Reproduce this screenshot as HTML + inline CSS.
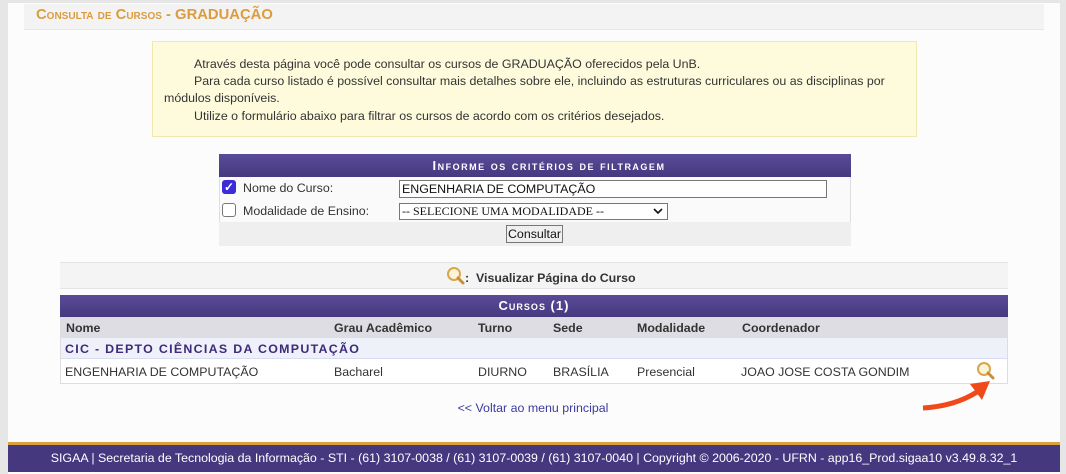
<!DOCTYPE html>
<html><head><meta charset="utf-8"><style>
*{margin:0;padding:0;box-sizing:border-box}
body{width:1066px;height:474px;background:#e6e6e6;font-family:"Liberation Sans",sans-serif;font-size:12.4px;color:#333;position:relative;overflow:hidden}
.a{position:absolute}
.sc{font-variant:small-caps;font-weight:bold;letter-spacing:1px}
.ph{background:linear-gradient(#5a4b97,#46397f);color:#fff;text-align:center}
</style></head><body>
<div class="a" style="left:8px;top:3px;width:1052px;height:471px;background:#fcfcfc"></div>
<div class="a" style="left:24px;top:4px;width:1020px;height:26px;background:#f3f3f3;border-bottom:1px solid #e8e8e8"></div>
<div class="a" style="left:36px;top:7px;color:#dc9c3e;font-size:14.8px;font-weight:bold"><span style="font-variant:small-caps">Consulta de Cursos</span> - GRADUAÇÃO</div>

<div class="a" style="left:152px;top:41px;width:765px;height:96px;background:#fdfbdc;border:1px solid #efe8b0;padding:14px 11px;line-height:17px;color:#333">
<div style="text-indent:30px">Através desta página você pode consultar os cursos de GRADUAÇÃO oferecidos pela UnB.</div>
<div style="text-indent:30px">Para cada curso listado é possível consultar mais detalhes sobre ele, incluindo as estruturas curriculares ou as disciplinas por módulos disponíveis.</div>
<div style="text-indent:30px;margin-top:1px">Utilize o formulário abaixo para filtrar os cursos de acordo com os critérios desejados.</div>
</div>

<div class="a" style="left:219px;top:154px;width:632px;height:92px;background:#fafafa;border:1px solid #ddd"></div>
<div class="a ph sc" style="left:219px;top:154px;width:632px;height:23px;line-height:24px;font-size:13px;letter-spacing:1.5px;padding-left:28px">Informe os critérios de filtragem</div>
<div class="a" style="left:222px;top:180px;width:14px;height:14px;background:#3b2bd8;border-radius:3px;color:#fff;font-size:12px;line-height:14px;text-align:center;font-weight:bold">✓</div>
<div class="a" style="left:243px;top:181px">Nome do Curso:</div>
<div class="a" style="left:399px;top:180px;width:428px;height:18px;border:1px solid #777;background:#fff;padding-left:2px;line-height:16px;color:#111">ENGENHARIA DE COMPUTAÇÃO</div>
<div class="a" style="left:222px;top:203px;width:14px;height:14px;background:#fff;border:1px solid #777;border-radius:3px"></div>
<div class="a" style="left:243px;top:204px">Modalidade de Ensino:</div>
<div class="a" style="left:399px;top:203px;width:269px;height:17px;border:1px solid #777;background:#fff;padding-left:2px;font-family:'Liberation Serif',serif;font-size:12px;line-height:15px;color:#111">-- SELECIONE UMA MODALIDADE --<svg style="position:absolute;right:4px;top:4px" width="10" height="7"><path d="M1 1 L5 5 L9 1" fill="none" stroke="#111" stroke-width="1.6"/></svg></div>
<div class="a" style="left:219px;top:222px;width:632px;height:24px;background:#efefef"></div>
<div class="a" style="left:506px;top:225px;width:57px;height:18px;border:1px solid #777;background:#efefef;line-height:16px;text-align:center;color:#111">Consultar</div>

<div class="a" style="left:60px;top:262px;width:948px;height:27px;background:#f4f4f4;border-top:1px solid #e4e4e4;border-bottom:1px solid #e4e4e4"></div>
<svg class="a" style="left:446px;top:266px" width="20" height="20"><circle cx="8" cy="8" r="6" fill="#fdf3d8" stroke="#d8a64c" stroke-width="2"/><line x1="12" y1="12" x2="17" y2="17" stroke="#c79032" stroke-width="3" stroke-linecap="round"/></svg>
<div class="a" style="left:465px;top:271px;font-weight:bold;color:#333">:&nbsp; Visualizar Página do Curso</div>

<div class="a ph sc" style="left:60px;top:295px;width:948px;height:22px;line-height:22px;font-size:13px">Cursos (1)</div>
<div class="a" style="left:60px;top:317px;width:948px;height:67px;border:1px solid #ddd;background:#fff"></div>
<div class="a" style="left:61px;top:317px;width:946px;height:21px;background:#dedde3"></div>
<div class="a" style="left:61px;top:338px;width:946px;height:21px;background:#eef0fa;border-bottom:1px solid #d8dcf0"></div>
<div class="a" style="top:321px;left:66px;font-weight:bold">Nome</div>
<div class="a" style="top:321px;left:334px;font-weight:bold">Grau Acadêmico</div>
<div class="a" style="top:321px;left:478px;font-weight:bold">Turno</div>
<div class="a" style="top:321px;left:553px;font-weight:bold">Sede</div>
<div class="a" style="top:321px;left:637px;font-weight:bold">Modalidade</div>
<div class="a" style="top:321px;left:742px;font-weight:bold">Coordenador</div>
<div class="a" style="top:342px;left:65px;font-weight:bold;color:#3f2a78;letter-spacing:1.3px">CIC - DEPTO CIÊNCIAS DA COMPUTAÇÃO</div>
<div class="a" style="top:365px;left:65px">ENGENHARIA DE COMPUTAÇÃO</div>
<div class="a" style="top:365px;left:334px">Bacharel</div>
<div class="a" style="top:365px;left:478px">DIURNO</div>
<div class="a" style="top:365px;left:553px">BRASÍLIA</div>
<div class="a" style="top:365px;left:637px">Presencial</div>
<div class="a" style="top:365px;left:741px">JOAO JOSE COSTA GONDIM</div>
<svg class="a" style="left:976px;top:361px" width="20" height="20"><circle cx="8" cy="8" r="6" fill="#fdf3d8" stroke="#d8a64c" stroke-width="2"/><line x1="12" y1="12" x2="17" y2="17" stroke="#c79032" stroke-width="3" stroke-linecap="round"/></svg>
<svg class="a" style="left:920px;top:378px" width="75" height="35"><path d="M3 30 Q35 28 57 14" fill="none" stroke="#f04a1a" stroke-width="5"/><polygon points="50,6 70,3 62,22" fill="#f04a1a"/></svg>

<div class="a" style="left:0;width:1066px;top:401px;text-align:center;color:#3b3ba0">&lt;&lt; Voltar ao menu principal</div>

<div class="a" style="left:8px;top:442px;width:1052px;height:30px;background:#45387f;border-top:3px solid #dba140;color:#fff;text-align:center;line-height:27px;font-size:12.4px">SIGAA | Secretaria de Tecnologia da Informação - STI - (61) 3107-0038 / (61) 3107-0039 / (61) 3107-0040 | Copyright © 2006-2020 - UFRN - app16_Prod.sigaa10 v3.49.8.32_1</div>
</body></html>
